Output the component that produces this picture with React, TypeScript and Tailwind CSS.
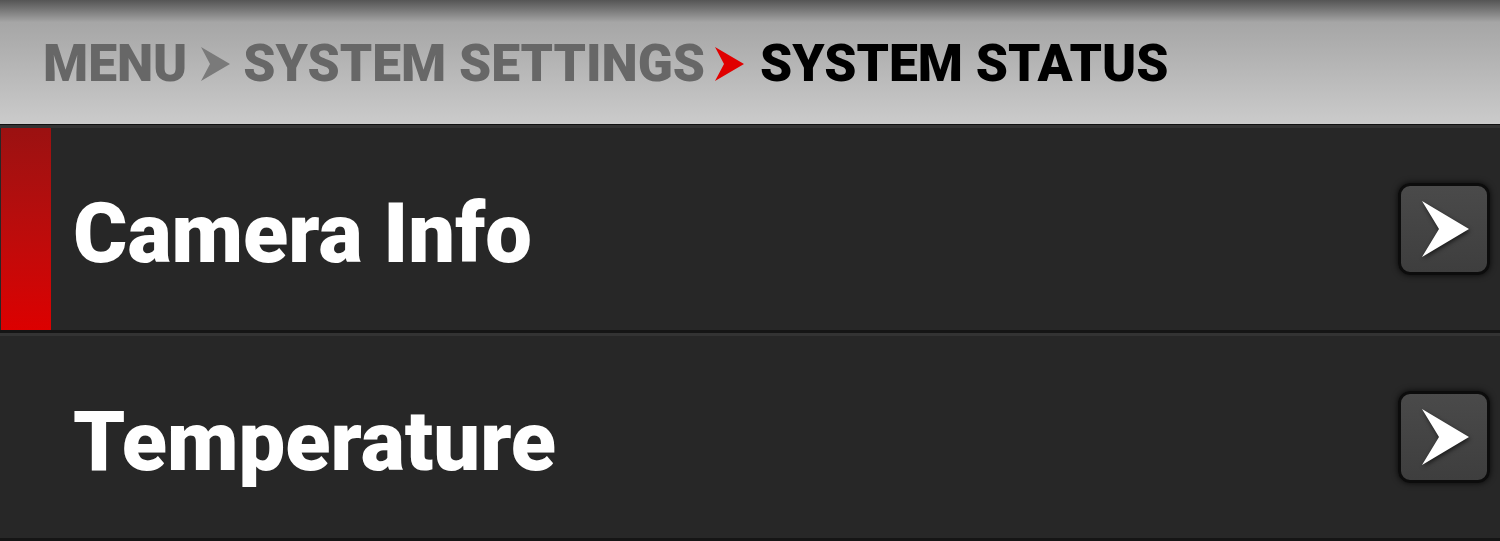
import React from "react";

function Chevron({ color }: { color: string }) {
  return (
    <svg width="32" height="34" viewBox="0 0 32 34" className="shrink-0">
      <path d="M2 0 L31 17 L2 34 L11 17 Z" fill={color} />
    </svg>
  );
}

function GoButton() {
  return (
    <div className="w-[92px] h-[92px] rounded-[12px] border-[3px] border-[#0c0c0c] bg-gradient-to-b from-[#4a4a4a] to-[#3e3e3e] shadow-[0_0_6px_rgba(0,0,0,0.8)] flex items-center justify-center">
      <svg width="50" height="56" viewBox="0 0 50 56" className="drop-shadow-[1px_2px_2px_rgba(0,0,0,0.6)] ml-[4px]">
        <path d="M1 0 L48 28 L1 56 L18 28 Z" fill="#fff" />
      </svg>
    </div>
  );
}

function Row({ label, active }: { label: string; active?: boolean }) {
  return (
    <div className="h-[208px] flex items-stretch bg-[#272727] border-t-[3px] border-t-[#333] border-b-[3px] border-b-[#151515]">
      <div
        className={
          active
            ? "w-[50px] ml-px bg-gradient-to-b from-[#9b1111] to-[#dc0000]"
            : "w-[50px] ml-px"
        }
      />
      <div className="flex-1 flex items-center pl-[22px] pt-[8px] text-white font-black text-[83px] leading-none">
        {label}
      </div>
      <div className="flex items-center pr-[10px]">
        <GoButton />
      </div>
    </div>
  );
}

export default function App() {
  return (
    <div
      className="w-[1500px] h-[541px] overflow-hidden bg-[#272727]"
      style={{ fontFamily: "Roboto, 'Liberation Sans', sans-serif" }}
    >
      <header className="h-[125px] bg-gradient-to-b from-[#555] via-[#a6a6a6] via-[18%] to-[#cbcbcb] border-b border-[#111] flex items-center pl-[43px] pt-[4px] font-black text-[51.5px] leading-none">
        <span className="text-[#676767]">MENU</span>
        <span className="mx-[12px]"><Chevron color="#7a7a7a" /></span>
        <span className="text-[#676767]">SYSTEM SETTINGS</span>
        <span className="ml-[8px] mr-[15px]"><Chevron color="#e00000" /></span>
        <span className="text-black">SYSTEM STATUS</span>
      </header>
      <Row label="Camera Info" active />
      <Row label="Temperature" />
    </div>
  );
}
